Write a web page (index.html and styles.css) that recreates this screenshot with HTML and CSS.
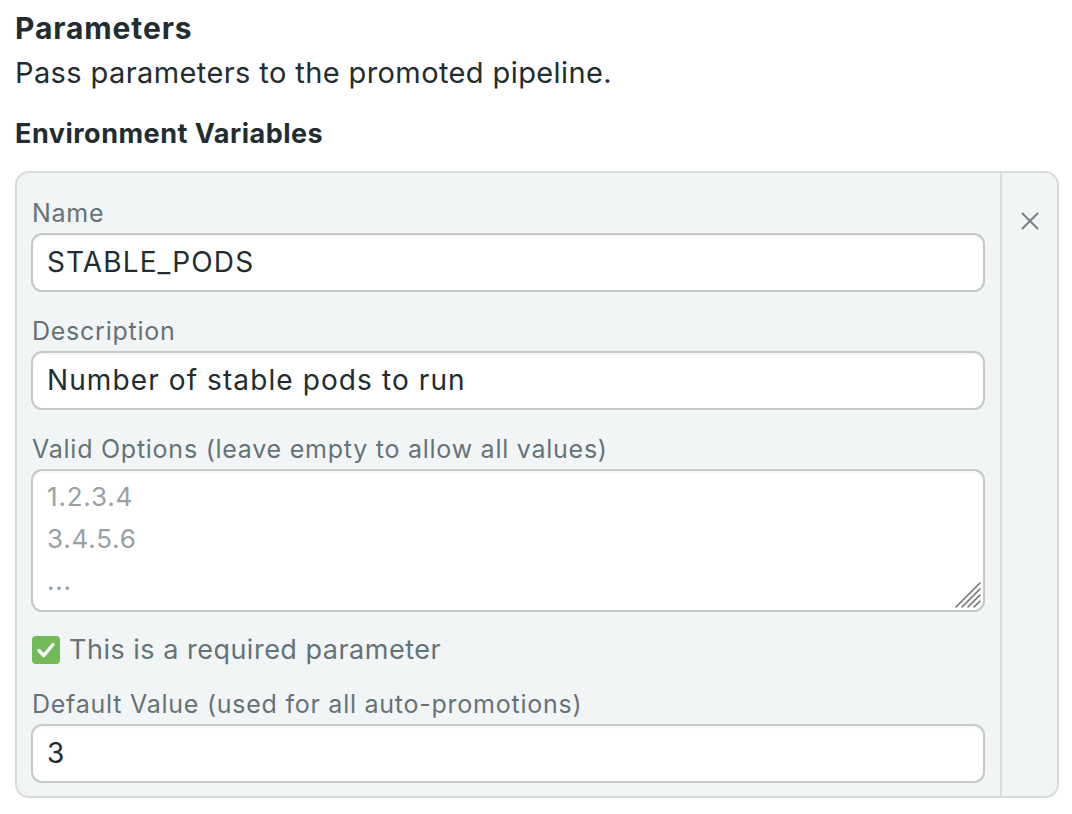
FILE: index.html
```html
<!DOCTYPE html>
<html>
<head>
<meta charset="utf-8">
<link rel="stylesheet" href="styles.css">
</head>
<body>
<div class="page">
  <h1 class="title">Parameters</h1>
  <p class="subtitle">Pass parameters to the promoted pipeline.</p>
  <h2 class="section">Environment Variables</h2>
  <div class="card">
    <div class="fields">
      <label class="label">Name</label>
      <div class="input">STABLE_PODS</div>
      <label class="label">Description</label>
      <div class="input">Number of stable pods to run</div>
      <label class="label">Valid Options <span class="hint">(leave empty to allow all values)</span></label>
      <div class="textarea">
        <div class="ph">1.2.3.4</div>
        <div class="ph">3.4.5.6</div>
        <div class="ph">...</div>
        <svg class="grip" width="26" height="26" viewBox="0 0 26 26"><g stroke="#6f6f6f" stroke-width="1.6" stroke-linecap="round"><line x1="1" y1="25" x2="25" y2="1"/><line x1="7" y1="25" x2="25" y2="7"/><line x1="13" y1="25" x2="25" y2="13"/><line x1="19" y1="25" x2="25" y2="19"/></g></svg>
      </div>
      <div class="check-row">
        <span class="checkbox"><svg width="28" height="28" viewBox="0 0 28 28"><path d="M7 14.5 L11.8 19.5 L21 8.5" fill="none" stroke="#fff" stroke-width="3.4" stroke-linecap="round" stroke-linejoin="round"/></svg></span>
        <span class="check-label">This is a required parameter</span>
      </div>
      <label class="label">Default Value <span class="hint">(used for all auto-promotions)</span></label>
      <div class="input">3</div>
    </div>
    <div class="side">
      <svg class="close" width="18" height="18" viewBox="0 0 18 18"><g stroke="#7b7f80" stroke-width="2" stroke-linecap="round"><line x1="1.5" y1="1.5" x2="16.5" y2="16.5"/><line x1="16.5" y1="1.5" x2="1.5" y2="16.5"/></g></svg>
    </div>
  </div>
</div>
</body>
</html>
```
FILE: styles.css
```css
html, body {
  margin: 0;
  padding: 0;
  background: #ffffff;
}
body {
  font-family: Inter, "Helvetica Neue", "Liberation Sans", sans-serif;
  color: #212d30;
}
.page {
  padding: 10px 13px 0 15px;
}
.title {
  margin: 0;
  font-size: 30px;
  line-height: 36px;
  font-weight: 700;
  letter-spacing: 0.9px;
  color: #212d30;
}
.subtitle {
  margin: 9px 0 0;
  font-size: 29px;
  line-height: 36px;
  letter-spacing: 0.4px;
  color: #212d30;
}
.section {
  margin: 26px 0 0;
  font-size: 27px;
  line-height: 34px;
  font-weight: 700;
  letter-spacing: 0.5px;
  color: #212d30;
}
.card {
  margin-top: 20px;
  display: flex;
  border: 2px solid #d8dcdd;
  border-radius: 14px;
  background: #f2f5f6;
  width: 1044px;
  box-sizing: border-box;
}
.fields {
  flex: 1;
  display: flex;
  flex-direction: column;
  padding: 25px 15px 13px 14px;
}
.label {
  display: block;
  font-size: 25px;
  line-height: 30px;
  letter-spacing: 0.75px;
  color: #657377;
  padding-left: 1px;
  margin-bottom: 5px;
}
.input {
  height: 59px;
  box-sizing: border-box;
  border: 2px solid #c6c9c9;
  border-radius: 11px;
  background: #ffffff;
  padding: 0 14px 2px;
  display: flex;
  align-items: center;
  font-size: 28px;
  letter-spacing: 1.1px;
  color: #212d30;
  box-shadow: inset 0 2px 2px rgba(0,0,0,0.04);
  margin-bottom: 24px;
}
.fields > .input:last-child {
  margin-bottom: 0;
}
.textarea {
  position: relative;
  height: 143px;
  box-sizing: border-box;
  border: 2px solid #c6c9c9;
  border-radius: 11px;
  background: #ffffff;
  padding: 5px 14px;
  box-shadow: inset 0 2px 2px rgba(0,0,0,0.04);
}
.ph {
  font-size: 26px;
  line-height: 42px;
  letter-spacing: 0.8px;
  color: #97a1a3;
}
.grip {
  position: absolute;
  right: 2px;
  bottom: 2px;
}
.check-row {
  display: flex;
  align-items: center;
  gap: 9px;
  margin: 23px 0 24px;
}
.checkbox {
  width: 28px;
  height: 28px;
  border-radius: 4px;
  background: #72b957;
  display: flex;
  margin-left: 1px;
}
.check-label {
  font-size: 27px;
  line-height: 30px;
  letter-spacing: 0.5px;
  color: #657377;
}
.side {
  width: 55px;
  border-left: 2px solid #d8dcdd;
  display: flex;
  justify-content: center;
  align-items: flex-start;
  padding-top: 39px;
}
.close {
  display: block;
}
```
